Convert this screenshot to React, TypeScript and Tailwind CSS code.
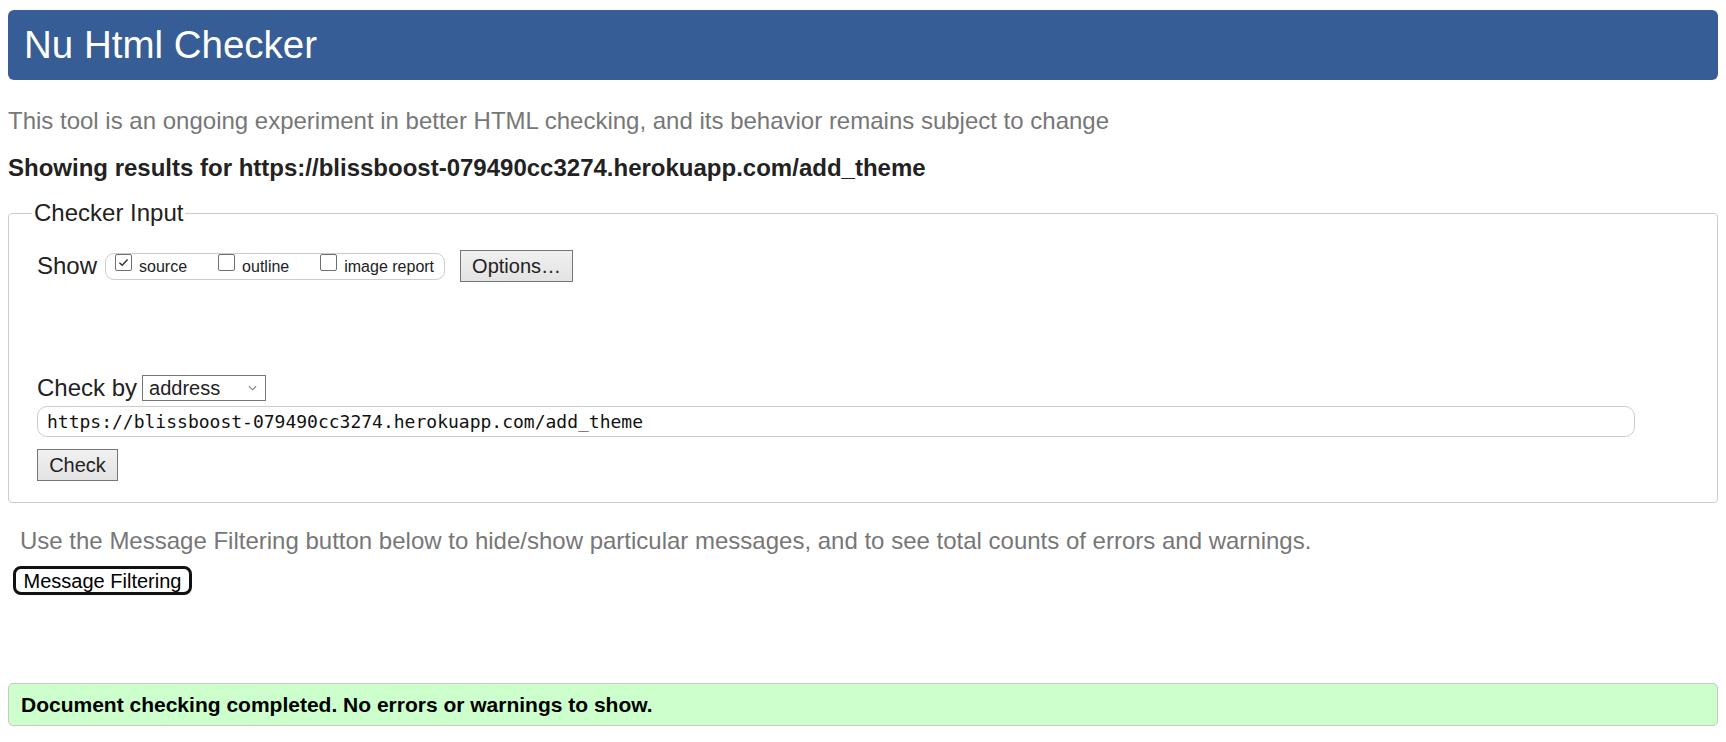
import React from 'react';

function Checkbox({ checked }: { checked?: boolean }) {
  return (
    <span className="flex h-[17px] w-[17px] shrink-0 items-center justify-center rounded-[2px] border-[1.5px] border-[#6f6f6f] bg-white">
      {checked && (
        <svg viewBox="0 0 16 16" className="h-[13px] w-[13px]">
          <path d="M3 8.2 L6.4 11.4 L13 4.4" fill="none" stroke="#333" strokeWidth="1.8" />
        </svg>
      )}
    </span>
  );
}

function ShowOption({ label, checked }: { label: string; checked?: boolean }) {
  return (
    <label className="flex items-start">
      <Checkbox checked={checked} />
      <span className="ml-[7px] mt-[3px] text-[16px] leading-[20px] text-[#222]">{label}</span>
    </label>
  );
}

export default function App() {
  return (
    <div className="min-h-screen bg-white px-2 pt-[10px] font-['Liberation_Sans',Arial,sans-serif] text-[#222]">
      {/* header */}
      <div className="flex h-[70px] items-center rounded-[6px] bg-[#365d95] pl-4">
        <h1 className="text-[38.5px] leading-none text-white">Nu Html Checker</h1>
      </div>

      <p className="mt-[27px] text-[24px] leading-[28px] text-[#777]">
        This tool is an ongoing experiment in better HTML checking, and its behavior remains subject to change
      </p>
      <p className="mt-[19px] text-[24px] font-bold leading-[28px]">
        Showing results for https://blissboost-079490cc3274.herokuapp.com/add_theme
      </p>

      {/* checker input */}
      <fieldset className="mt-[17px] rounded-[4px] border border-[#ccc] pb-[21px] pl-[28px] pr-[28px]">
        <legend className="-ml-[5px] px-[2px] text-[24px] leading-[28px]">Checker Input</legend>

        <div className="mt-[23px] flex items-center">
          <span className="text-[24px] leading-[28px]">Show</span>
          <div className="ml-[8px] flex h-[27px] items-start gap-[31px] rounded-[9px] border border-[#ccc] pl-[9px] pr-[10px]">
            <ShowOption label="source" checked />
            <ShowOption label="outline" />
            <ShowOption label="image report" />
          </div>
          <button className="ml-[15px] h-[32px] w-[113px] border border-[#767676] bg-gradient-to-b from-[#f0f0f0] to-[#e3e3e3] text-[20px] leading-none text-[#222]">
            Options…
          </button>
        </div>

        <div className="mt-[92px] flex items-center">
          <span className="text-[24px] leading-[28px]">Check by</span>
          <div className="ml-[5px] flex h-[26px] w-[124px] items-center justify-between border border-[#767676] bg-white pl-[6px] pr-[8px]">
            <span className="text-[20px] leading-none">address</span>
            <svg viewBox="0 0 10 6" className="h-[6px] w-[9px]">
              <path d="M1 1 L5 5 L9 1" fill="none" stroke="#777" strokeWidth="1.2" />
            </svg>
          </div>
        </div>

        <div className="mt-[4px] flex h-[31px] w-[1598px] items-center rounded-[10px] border border-[#ccc] pl-[9px]">
          <span className="font-['DejaVu_Sans_Mono','Liberation_Mono',monospace] text-[18px] leading-none text-[#111]">
            https://blissboost-079490cc3274.herokuapp.com/add_theme
          </span>
        </div>

        <button className="mt-[12px] h-[32px] w-[81px] border border-[#767676] bg-gradient-to-b from-[#f0f0f0] to-[#e3e3e3] text-[20px] leading-none text-[#222]">
          Check
        </button>
      </fieldset>

      <p className="mt-[24px] pl-3 text-[24px] leading-[28px] text-[#777]">
        Use the Message Filtering button below to hide/show particular messages, and to see total counts of errors and warnings.
      </p>
      <button className="ml-[5px] mt-[11px] h-[29px] w-[179px] rounded-[8px] border-[3px] border-[#111] bg-white text-[20px] leading-none text-black">
        Message Filtering
      </button>

      <div className="mt-[88px] flex h-[43px] items-center rounded-[5px] border border-[#c8c8c8] bg-[#ccffcc] pl-3">
        <p className="text-[21px] font-bold leading-none text-black">
          Document checking completed. No errors or warnings to show.
        </p>
      </div>
    </div>
  );
}
